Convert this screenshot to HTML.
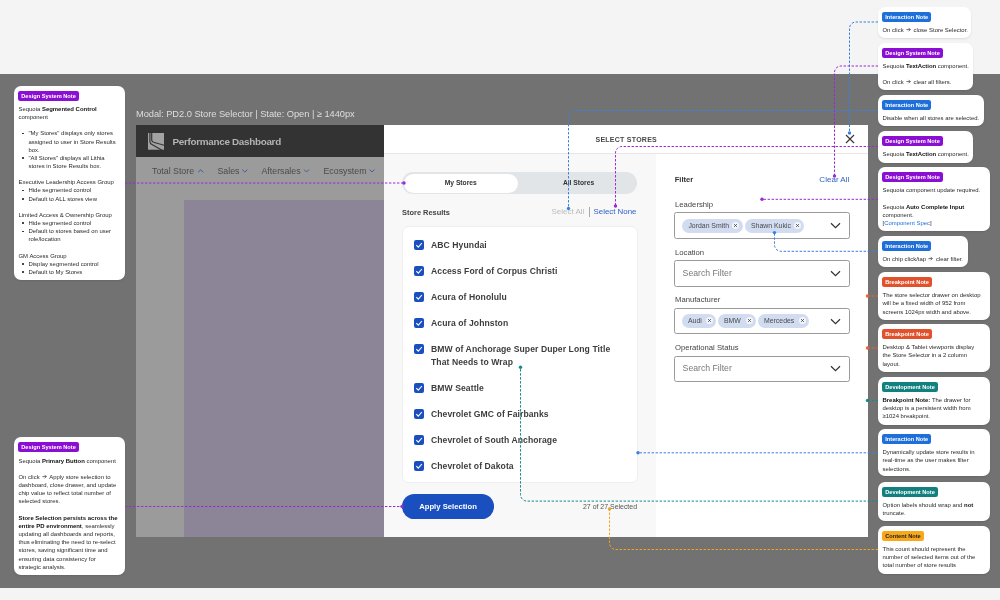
<!DOCTYPE html>
<html><head><meta charset="utf-8">
<style>
*{box-sizing:border-box;margin:0;padding:0}
html,body{width:1000px;height:600px;overflow:hidden;}
body{will-change:transform;background:#f4f4f4;font-family:"Liberation Sans",sans-serif;position:relative}
.a{position:absolute}
.band{left:0;top:74px;width:1000px;height:514px;background:#727272}
.card{position:absolute;background:#fff;border-radius:7px;box-shadow:0 1px 2px rgba(0,0,0,0.10)}
.tag{position:absolute;left:4.2px;top:5px;height:10px;line-height:10px;padding:0 3.1px;border-radius:2.2px;color:#fff;font-weight:700;font-size:5.65px;white-space:nowrap}
.ds{background:#8b0fd2}.ix{background:#1e6fd9}.bp{background:#e0512c}.dv{background:#12807f}.ct{background:#f7a81b;color:#222}
.lines{position:absolute;left:4.5px;font-size:5.95px;line-height:8.15px;color:#2a2a2a;white-space:nowrap}
.lines b{font-weight:700;color:#111}
.lines .ind{padding-left:10px;position:relative}
.lines .ind.bul:before{content:"";position:absolute;left:3.5px;top:3.3px;width:1.6px;height:1.6px;border-radius:50%;background:#222}
.lnk{color:#1e6fd9}
.arr{display:inline-block;vertical-align:0px;margin:0 1px 0 0.6px}
.lbl{position:absolute;left:675px;font-size:7.7px;color:#444;white-space:nowrap}
.inp{position:absolute;left:674.4px;width:175.4px;border:1px solid #9a9a9a;border-radius:2.5px;background:#fff}
.ph{position:absolute;left:682.6px;font-size:8.7px;color:#777;white-space:nowrap}
.chip{position:absolute;height:14.2px;border-radius:7.1px;background:#d1dcf0;font-size:6.9px;color:#4a4a4a;line-height:14.2px;padding-left:6px;white-space:nowrap}
.chip .cx{position:absolute;right:3.2px;top:3.5px;width:7px;height:7px;border-radius:50%;background:#f3f5f9}
.cb{position:absolute;left:414px;width:10px;height:10px;border-radius:2px;background:#1a4fbf}
.cb svg{display:block}
.rt{position:absolute;left:431px;font-size:8.6px;font-weight:700;letter-spacing:0.08px;color:#3d3d3d;line-height:13.3px;white-space:nowrap}
</style></head><body>
<div class="a band"></div>

<!-- left note 1 -->
<div class="card" style="left:14px;top:85.6px;width:111px;height:194.6px">
 <div class="tag ds">Design System Note</div>
 <div class="lines" style="top:19.3px">
  <div>Sequoia <b>Segmented Control</b></div>
  <div>component</div>
  <div>&nbsp;</div>
  <div class="ind bul">"My Stores" displays only stores</div>
  <div class="ind">assigned to user in Store Results</div>
  <div class="ind">box.</div>
  <div class="ind bul">"All Stores" displays all Lithia</div>
  <div class="ind">stores in Store Results box.</div>
  <div>&nbsp;</div>
  <div>Executive Leadership Access Group</div>
  <div class="ind bul">Hide segmented control</div>
  <div class="ind bul">Default to ALL stores view</div>
  <div>&nbsp;</div>
  <div>Limited Access &amp; Ownership Group</div>
  <div class="ind bul">Hide segmented control</div>
  <div class="ind bul">Default to stores based on user</div>
  <div class="ind">role/location</div>
  <div>&nbsp;</div>
  <div>GM Access Group</div>
  <div class="ind bul">Display segmented control</div>
  <div class="ind bul">Default to My Stores</div>
 </div>
</div>

<!-- left note 2 -->
<div class="card" style="left:14px;top:437.4px;width:111px;height:138px">
 <div class="tag ds">Design System Note</div>
 <div class="lines" style="top:19.3px">
  <div>Sequoia <b>Primary Button</b> component</div>
  <div>&nbsp;</div>
  <div>On click <svg class="arr" width="5" height="5" viewBox="0 0 5 5"><path d="M0.4 2.6 H4.3 M2.6 0.9 L4.3 2.6 L2.6 4.3" stroke="#333" stroke-width="0.7" fill="none"/></svg> Apply store selection to</div>
  <div>dashboard, close drawer, and update</div>
  <div>chip value to reflect total number of</div>
  <div>selected stores.</div>
  <div>&nbsp;</div>
  <div><b>Store Selection persists across the</b></div>
  <div><b>entire PD environment</b>, seamlessly</div>
  <div>updating all dashboards and reports,</div>
  <div>thus eliminating the need to re-select</div>
  <div>stores, saving significant time and</div>
  <div>ensuring data consistency for</div>
  <div>strategic analysis.</div>
 </div>
</div>

<!-- title -->
<div class="a" style="left:136px;top:108.5px;font-size:9.3px;letter-spacing:-0.04px;color:#dedede;white-space:nowrap">Modal: PD2.0 Store Selector | State: Open | ≥ 1440px</div>

<!-- app -->
<div class="a" style="left:136px;top:125px;width:248px;height:32px;background:#333"></div>
<svg class="a" style="left:147px;top:132px" width="18" height="18" viewBox="0 0 18 18">
 <path d="M1 1 H17 V17.7 H1 Z" fill="#a3a3a3"/>
 <path d="M2.9 0 V9.5 Q2.9 11.5 5 12.5 L15.5 18.5 M4.7 0 V8 Q4.7 9.6 6.6 10.3 L18 13.5" stroke="#333" stroke-width="1.15" fill="none"/>
</svg>
<div class="a" style="left:172.5px;top:136px;font-size:9.9px;letter-spacing:-0.3px;font-weight:700;color:#b4b4b4;white-space:nowrap">Performance Dashboard</div>
<div class="a" style="left:136px;top:157px;width:248px;height:380px;background:#9b9b9b"></div>
<div class="a" style="left:152px;top:165.7px;font-size:8.8px;color:#4a4a4a;white-space:nowrap">Total Store</div>
<div class="a" style="left:217.5px;top:165.7px;font-size:8.8px;color:#4a4a4a;white-space:nowrap">Sales</div>
<div class="a" style="left:261.5px;top:165.7px;font-size:8.8px;color:#4a4a4a;white-space:nowrap">Aftersales</div>
<div class="a" style="left:323.5px;top:165.7px;font-size:8.8px;color:#4a4a4a;white-space:nowrap">Ecosystem</div>
<svg class="a" style="left:0;top:0" width="1000" height="600">
 <g stroke="#3f5fa0" stroke-width="1" fill="none">
  <path d="M198 172.3 L200.7 169.8 L203.4 172.3"/>
  <path d="M242.2 169.6 L244.8 172.1 L247.4 169.6"/>
  <path d="M304 169.5 L306.5 172 L309 169.5"/>
  <path d="M369.5 169.5 L372 172 L374.5 169.5"/>
 </g>
</svg>
<div class="a" style="left:184px;top:200px;width:200px;height:337px;background:#8c8598"></div>

<!-- modal -->
<div class="a" style="left:384px;top:125px;width:484px;height:412px;background:#fff"></div>
<div class="a" style="left:384px;top:153px;width:484px;height:1px;background:#e6e6e6"></div>
<div class="a" style="left:384px;top:154px;width:272px;height:383px;background:#f8f8f8"></div>
<div class="a" style="left:595.5px;top:135.5px;font-size:7px;font-weight:700;letter-spacing:0.25px;color:#474747;white-space:nowrap">SELECT STORES</div>
<svg class="a" style="left:845px;top:134px" width="10" height="10"><path d="M1 1 L9 9 M9 1 L1 9" stroke="#333" stroke-width="1.1"/></svg>

<!-- segmented -->
<div class="a" style="left:402px;top:172px;width:235px;height:22px;border-radius:11px;background:#e1e5e8"></div>
<div class="a" style="left:403.5px;top:173.5px;width:114.5px;height:19px;border-radius:9.5px;background:#fff"></div>
<div class="a" style="left:403.5px;top:179.3px;width:114.5px;text-align:center;font-size:6.7px;font-weight:700;color:#333">My Stores</div>
<div class="a" style="left:520px;top:179.3px;width:117px;text-align:center;font-size:6.7px;font-weight:700;color:#333">All Stores</div>

<div class="a" style="left:402px;top:207.5px;font-size:7.45px;font-weight:700;color:#444;white-space:nowrap">Store Results</div>
<div class="a" style="left:551.5px;top:207px;font-size:8px;color:#bbb;white-space:nowrap">Select All</div>
<div class="a" style="left:589px;top:206.5px;width:0.8px;height:10px;background:#aaa"></div>
<div class="a" style="left:593.5px;top:207px;font-size:7.9px;color:#2f5fc7;white-space:nowrap">Select None</div>

<div class="a" style="left:402px;top:225.8px;width:236px;height:257px;background:#fff;border:1px solid #eeeeee;border-radius:6px"></div>
<div class="cb" style="top:240px"><svg width="10" height="10"><path d="M2.3 5.2 L4.3 7.2 L7.9 3" stroke="#fff" stroke-width="1.1" fill="none"/></svg></div>
<div class="rt" style="top:238.5px">ABC Hyundai</div>
<div class="cb" style="top:266px"><svg width="10" height="10"><path d="M2.3 5.2 L4.3 7.2 L7.9 3" stroke="#fff" stroke-width="1.1" fill="none"/></svg></div>
<div class="rt" style="top:264.5px">Access Ford of Corpus Christi</div>
<div class="cb" style="top:292px"><svg width="10" height="10"><path d="M2.3 5.2 L4.3 7.2 L7.9 3" stroke="#fff" stroke-width="1.1" fill="none"/></svg></div>
<div class="rt" style="top:290.5px">Acura of Honolulu</div>
<div class="cb" style="top:318px"><svg width="10" height="10"><path d="M2.3 5.2 L4.3 7.2 L7.9 3" stroke="#fff" stroke-width="1.1" fill="none"/></svg></div>
<div class="rt" style="top:316.5px">Acura of Johnston</div>
<div class="cb" style="top:344px"><svg width="10" height="10"><path d="M2.3 5.2 L4.3 7.2 L7.9 3" stroke="#fff" stroke-width="1.1" fill="none"/></svg></div>
<div class="rt" style="top:342.5px">BMW of Anchorage Super Duper Long Title<br>That Needs to Wrap</div>
<div class="cb" style="top:383px"><svg width="10" height="10"><path d="M2.3 5.2 L4.3 7.2 L7.9 3" stroke="#fff" stroke-width="1.1" fill="none"/></svg></div>
<div class="rt" style="top:381.5px">BMW Seattle</div>
<div class="cb" style="top:409px"><svg width="10" height="10"><path d="M2.3 5.2 L4.3 7.2 L7.9 3" stroke="#fff" stroke-width="1.1" fill="none"/></svg></div>
<div class="rt" style="top:407.5px">Chevrolet GMC of Fairbanks</div>
<div class="cb" style="top:435px"><svg width="10" height="10"><path d="M2.3 5.2 L4.3 7.2 L7.9 3" stroke="#fff" stroke-width="1.1" fill="none"/></svg></div>
<div class="rt" style="top:433.5px">Chevrolet of South Anchorage</div>
<div class="cb" style="top:461px"><svg width="10" height="10"><path d="M2.3 5.2 L4.3 7.2 L7.9 3" stroke="#fff" stroke-width="1.1" fill="none"/></svg></div>
<div class="rt" style="top:459.5px">Chevrolet of Dakota</div>

<div class="a" style="left:402px;top:494px;width:92px;height:24.6px;border-radius:12.3px;background:#1a4fbf"></div>
<div class="a" style="left:402px;top:501.5px;width:92px;text-align:center;font-size:7.7px;font-weight:700;color:#fff">Apply Selection</div>
<div class="a" style="left:560px;top:503px;width:77px;text-align:right;font-size:6.94px;color:#555;white-space:nowrap">27 of 27 Selected</div>

<!-- filter pane -->
<div class="a" style="left:674.7px;top:175px;font-size:7.6px;font-weight:700;color:#333">Filter</div>
<div class="a" style="left:780px;top:175px;width:69.3px;text-align:right;font-size:8.05px;color:#2f5fc7">Clear All</div>
<div class="lbl" style="top:199.7px">Leadership</div>
<div class="inp" style="top:212.4px;height:26.5px"></div>
<div class="chip" style="left:682.4px;top:218.8px;width:60.2px">Jordan Smith<svg class="cx" width="7" height="7"><path d="M2.1 2.1 L4.9 4.9 M4.9 2.1 L2.1 4.9" stroke="#444" stroke-width="0.85"/></svg></div>
<div class="chip" style="left:745px;top:218.8px;width:59px">Shawn Kukic<svg class="cx" width="7" height="7"><path d="M2.1 2.1 L4.9 4.9 M4.9 2.1 L2.1 4.9" stroke="#444" stroke-width="0.85"/></svg></div>
<svg class="a" style="left:830px;top:222px" width="11" height="7"><path d="M1 1.2 L5.5 5.6 L10 1.2" stroke="#333" stroke-width="1.2" fill="none"/></svg>
<div class="lbl" style="top:247.5px">Location</div>
<div class="inp" style="top:260.4px;height:26.2px"></div>
<div class="ph" style="top:267.5px">Search Filter</div>
<svg class="a" style="left:830px;top:270px" width="11" height="7"><path d="M1 1.2 L5.5 5.6 L10 1.2" stroke="#333" stroke-width="1.2" fill="none"/></svg>
<div class="lbl" style="top:294.7px">Manufacturer</div>
<div class="inp" style="top:307.6px;height:26.5px"></div>
<div class="chip" style="left:682px;top:313.6px;width:34px">Audi<svg class="cx" width="7" height="7"><path d="M2.1 2.1 L4.9 4.9 M4.9 2.1 L2.1 4.9" stroke="#444" stroke-width="0.85"/></svg></div>
<div class="chip" style="left:718px;top:313.6px;width:37.8px">BMW<svg class="cx" width="7" height="7"><path d="M2.1 2.1 L4.9 4.9 M4.9 2.1 L2.1 4.9" stroke="#444" stroke-width="0.85"/></svg></div>
<div class="chip" style="left:758px;top:313.6px;width:51px">Mercedes<svg class="cx" width="7" height="7"><path d="M2.1 2.1 L4.9 4.9 M4.9 2.1 L2.1 4.9" stroke="#444" stroke-width="0.85"/></svg></div>
<svg class="a" style="left:830px;top:317.5px" width="11" height="7"><path d="M1 1.2 L5.5 5.6 L10 1.2" stroke="#333" stroke-width="1.2" fill="none"/></svg>
<div class="lbl" style="top:342.5px">Operational Status</div>
<div class="inp" style="top:355.5px;height:26.2px"></div>
<div class="ph" style="top:362.8px">Search Filter</div>
<svg class="a" style="left:830px;top:365.2px" width="11" height="7"><path d="M1 1.2 L5.5 5.6 L10 1.2" stroke="#333" stroke-width="1.2" fill="none"/></svg>
<div class="card" style="left:878px;top:6.5px;width:93px;height:31.4px"><div class="tag ix">Interaction Note</div><div class="lines" style="top:19.3px"><div>On click <svg class="arr" width="5" height="5" viewBox="0 0 5 5"><path d="M0.4 2.6 H4.3 M2.6 0.9 L4.3 2.6 L2.6 4.3" stroke="#333" stroke-width="0.7" fill="none"/></svg> close Store Selector.</div></div></div>
<div class="card" style="left:878px;top:42.5px;width:95px;height:47.8px"><div class="tag ds">Design System Note</div><div class="lines" style="top:19.3px"><div>Sequoia <b>TextAction</b> component.</div><div>&nbsp;</div><div>On click <svg class="arr" width="5" height="5" viewBox="0 0 5 5"><path d="M0.4 2.6 H4.3 M2.6 0.9 L4.3 2.6 L2.6 4.3" stroke="#333" stroke-width="0.7" fill="none"/></svg> clear all filters.</div></div></div>
<div class="card" style="left:878px;top:95px;width:105.5px;height:31.3px"><div class="tag ix">Interaction Note</div><div class="lines" style="top:19.3px"><div>Disable when all stores are selected.</div></div></div>
<div class="card" style="left:878px;top:131.2px;width:94.8px;height:31.5px"><div class="tag ds">Design System Note</div><div class="lines" style="top:19.3px"><div>Sequoia <b>TextAction</b> component.</div></div></div>
<div class="card" style="left:878px;top:167.2px;width:112px;height:64px"><div class="tag ds">Design System Note</div><div class="lines" style="top:19.3px"><div>Sequoia component update required.</div><div>&nbsp;</div><div>Sequoia <b>Auto Complete Input</b></div><div>component.</div><div>[<span class="lnk">Component Spec</span>]</div></div></div>
<div class="card" style="left:878px;top:236px;width:89.5px;height:31.2px"><div class="tag ix">Interaction Note</div><div class="lines" style="top:19.3px"><div>On chip click/tap <svg class="arr" width="5" height="5" viewBox="0 0 5 5"><path d="M0.4 2.6 H4.3 M2.6 0.9 L4.3 2.6 L2.6 4.3" stroke="#333" stroke-width="0.7" fill="none"/></svg> clear filter.</div></div></div>
<div class="card" style="left:878px;top:272px;width:112px;height:48px"><div class="tag bp">Breakpoint Note</div><div class="lines" style="top:19.3px"><div>The store selector drawer on desktop</div><div>will be a fixed width of 952 from</div><div>screens 1024px width and above.</div></div></div>
<div class="card" style="left:878px;top:324px;width:112px;height:48px"><div class="tag bp">Breakpoint Note</div><div class="lines" style="top:19.3px"><div>Desktop &amp; Tablet viewports display</div><div>the Store Selector in a 2 column</div><div>layout.</div></div></div>
<div class="card" style="left:878px;top:376.7px;width:112px;height:48px"><div class="tag dv">Development Note</div><div class="lines" style="top:19.3px"><div><b>Breakpoint Note:</b> The drawer for</div><div>desktop is a persistent width from</div><div>≥1024 breakpoint.</div></div></div>
<div class="card" style="left:878px;top:429px;width:112px;height:47.4px"><div class="tag ix">Interaction Note</div><div class="lines" style="top:19.3px"><div>Dynamically update store results in</div><div>real-time as the user makes filter</div><div>selections.</div></div></div>
<div class="card" style="left:878px;top:481.5px;width:112px;height:39.5px"><div class="tag dv">Development Note</div><div class="lines" style="top:19.3px"><div>Option labels should wrap and <b>not</b></div><div>truncate.</div></div></div>
<div class="card" style="left:878px;top:525.6px;width:112px;height:48px"><div class="tag ct">Content Note</div><div class="lines" style="top:19.3px"><div>This count should represent the</div><div>number of selected items out of the</div><div>total number of store results</div></div></div>
<svg class="a" style="left:0;top:0;pointer-events:none" width="1000" height="600"><path d="M125 183 H404" stroke="#9a2ad2" stroke-width="1" fill="none" stroke-dasharray="2.4 1.6"/><circle cx="404" cy="183" r="1.7" fill="#9a2ad2"/><path d="M125 506.5 H402" stroke="#9a2ad2" stroke-width="1" fill="none" stroke-dasharray="2.4 1.6"/><circle cx="402" cy="506.5" r="1.7" fill="#9a2ad2"/><path d="M878 22 H856.0 A6.5 6.5 0 0 0 849.5 28.5 V133" stroke="#3a80e2" stroke-width="1" fill="none" stroke-dasharray="2.4 1.6"/><circle cx="849.5" cy="133" r="1.7" fill="#3a80e2"/><path d="M878 66 H841.0 A6.5 6.5 0 0 0 834.5 72.5 V176" stroke="#9a2ad2" stroke-width="1" fill="none" stroke-dasharray="2.4 1.6"/><circle cx="834.5" cy="176" r="1.7" fill="#9a2ad2"/><path d="M878 110.5 H575.0 A6.5 6.5 0 0 0 568.5 117.0 V208.5" stroke="#3a80e2" stroke-width="1" fill="none" stroke-dasharray="2.4 1.6"/><circle cx="568.5" cy="208.5" r="1.7" fill="#3a80e2"/><path d="M878 146.5 H622.0 A6.5 6.5 0 0 0 615.5 153.0 V206" stroke="#9a2ad2" stroke-width="1" fill="none" stroke-dasharray="2.4 1.6"/><circle cx="615.5" cy="206" r="1.7" fill="#9a2ad2"/><path d="M878 199.3 H762" stroke="#9a2ad2" stroke-width="1" fill="none" stroke-dasharray="2.4 1.6"/><circle cx="762" cy="199.3" r="1.7" fill="#9a2ad2"/><path d="M878 251.3 H781.0 A6.5 6.5 0 0 1 774.5 244.8 V232.6" stroke="#3a80e2" stroke-width="1" fill="none" stroke-dasharray="2.4 1.6"/><circle cx="774.5" cy="232.6" r="1.7" fill="#3a80e2"/><path d="M878 296 H868" stroke="#f0622f" stroke-width="1" fill="none" stroke-dasharray="2.4 1.6"/><circle cx="867.5" cy="296" r="1.7" fill="#f0622f"/><path d="M878 348 H868" stroke="#f0622f" stroke-width="1" fill="none" stroke-dasharray="2.4 1.6"/><circle cx="867.5" cy="348" r="1.7" fill="#f0622f"/><path d="M878 400.4 H868" stroke="#158a8a" stroke-width="1" fill="none" stroke-dasharray="2.4 1.6"/><circle cx="867.5" cy="400.4" r="1.7" fill="#158a8a"/><path d="M878 452.8 H638" stroke="#3a80e2" stroke-width="1" fill="none" stroke-dasharray="2.4 1.6"/><circle cx="638" cy="452.8" r="1.7" fill="#3a80e2"/><path d="M878 501.1 H527.0 A6.5 6.5 0 0 1 520.5 494.6 V367.2" stroke="#158a8a" stroke-width="1" fill="none" stroke-dasharray="2.4 1.6"/><circle cx="520.5" cy="367.2" r="1.7" fill="#158a8a"/><path d="M878 549.5 H616.0 A6.5 6.5 0 0 1 609.5 543.0 V509" stroke="#f5a020" stroke-width="1" fill="none" stroke-dasharray="2.4 1.6"/><circle cx="609.5" cy="509" r="1.7" fill="#f5a020"/></svg>
</body></html>
